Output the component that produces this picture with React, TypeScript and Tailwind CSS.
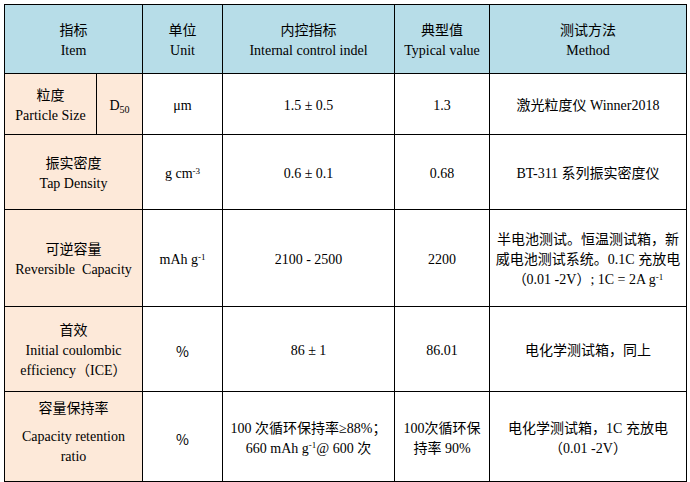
import React from "react";

const cell =
  "flex flex-col items-center justify-center text-center leading-[20px] text-[14px] text-black pt-[4px]";
const head = `${cell} bg-[#b7dde8]`;
const peach = `${cell} bg-[#fde9d9]`;
const white = `${cell} bg-white`;

export default function App() {
  return (
    <div className="w-[690px] h-[482px] bg-white font-['Liberation_Serif','Noto_Sans_CJK_SC',serif]">
      <div className="pt-[4px] pl-[4px]">
        <div className="grid w-[683px] grid-cols-[91px_45px_79px_171px_94px_196px] grid-rows-[68px_60px_74px_96px_84px_89px] gap-px bg-black p-px">
          {/* header */}
          <div className={`${head} col-span-2`}>
            <div>指标</div>
            <div>Item</div>
          </div>
          <div className={head}>
            <div>单位</div>
            <div>Unit</div>
          </div>
          <div className={head}>
            <div>内控指标</div>
            <div>Internal control indel</div>
          </div>
          <div className={head}>
            <div>典型值</div>
            <div>Typical value</div>
          </div>
          <div className={head}>
            <div>测试方法</div>
            <div>Method</div>
          </div>

          {/* row 1 */}
          <div className={peach}>
            <div>粒度</div>
            <div>Particle Size</div>
          </div>
          <div className={peach}>
            <div>
              D<sub className="text-[10px]">50</sub>
            </div>
          </div>
          <div className={white}>μm</div>
          <div className={white}>1.5 ± 0.5</div>
          <div className={white}>1.3</div>
          <div className={white}>激光粒度仪 Winner2018</div>

          {/* row 2 */}
          <div className={`${peach} col-span-2`}>
            <div>振实密度</div>
            <div>Tap Density</div>
          </div>
          <div className={white}>
            <div>
              g cm<sup className="text-[9px]">-3</sup>
            </div>
          </div>
          <div className={white}>0.6 ± 0.1</div>
          <div className={white}>0.68</div>
          <div className={white}>BT-311 系列振实密度仪</div>

          {/* row 3 */}
          <div className={`${peach} col-span-2`}>
            <div>可逆容量</div>
            <div>Reversible&nbsp; Capacity</div>
          </div>
          <div className={white}>
            <div>
              mAh g<sup className="text-[9px]">-1</sup>
            </div>
          </div>
          <div className={white}>2100 - 2500</div>
          <div className={white}>2200</div>
          <div className={white}>
            <div>半电池测试。恒温测试箱，新</div>
            <div>威电池测试系统。0.1C 充放电</div>
            <div>
              （0.01 -2V）; 1C = 2A g<sup className="text-[9px]">-1</sup>
            </div>
          </div>

          {/* row 4 */}
          <div className={`${peach} col-span-2`}>
            <div>首效</div>
            <div>Initial coulombic</div>
            <div>efficiency（ICE）</div>
          </div>
          <div className={white}>
            <div className="font-['Noto_Sans_CJK_SC',sans-serif]">%</div>
          </div>
          <div className={white}>86 ± 1</div>
          <div className={white}>86.01</div>
          <div className={white}>电化学测试箱，同上</div>

          {/* row 5 */}
          <div className={`${peach} col-span-2 pb-[12px]`}>
            <div className="mb-[8px]">容量保持率</div>
            <div>Capacity retention</div>
            <div>ratio</div>
          </div>
          <div className={white}>
            <div className="font-['Noto_Sans_CJK_SC',sans-serif]">%</div>
          </div>
          <div className={white}>
            <div>100 次循环保持率≥88%；</div>
            <div>
              660 mAh g<sup className="text-[9px]">-1</sup>@ 600 次
            </div>
          </div>
          <div className={white}>
            <div>100次循环保</div>
            <div>持率 90%</div>
          </div>
          <div className={white}>
            <div>电化学测试箱，1C 充放电</div>
            <div>（0.01 -2V）</div>
          </div>
        </div>
      </div>
    </div>
  );
}
